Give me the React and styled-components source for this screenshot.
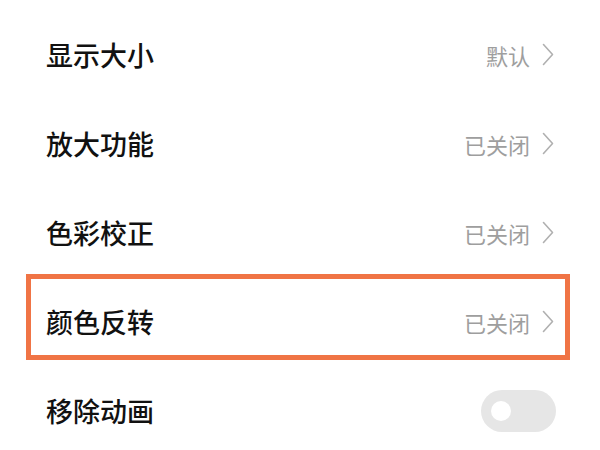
import React from "react";
import styled, { createGlobalStyle } from "styled-components";

const Global = createGlobalStyle`
  html, body { margin: 0; padding: 0; background: #ffffff; }
  body { font-family: "Noto Sans CJK SC", "Noto Sans", sans-serif; }
`;

const List = styled.div`
  width: 600px;
  height: 450px;
  overflow: hidden;
  padding-top: 10px;
  box-sizing: border-box;
  display: flex;
  flex-direction: column;
`;

const Row = styled.div`
  position: relative;
  height: 89px;
  flex: none;
  display: flex;
  align-items: center;
  justify-content: space-between;
  padding: 0 46px 0 46px;
  box-sizing: border-box;
  ${(p) =>
    p.$highlight &&
    `
    &::after {
      content: "";
      position: absolute;
      left: 26px;
      right: 30px;
      top: -3px;
      bottom: 6px;
      border: 5px solid #f07445;
    }
  `}
`;

const Title = styled.span`
  font-size: 27px;
  font-weight: 500;
  color: #111111;
`;

const Right = styled.div`
  display: flex;
  align-items: center;
  gap: 12px;
`;

const Value = styled.span`
  font-size: 22px;
  color: #9e9e9e;
`;

const Chevron = () => (
  <svg width="12" height="23" viewBox="0 0 12 23">
    <path d="M1.5 1.5 L10.5 11.5 L1.5 21.5" fill="none" stroke="#b0b0b0" strokeWidth="1.6" strokeLinecap="round" strokeLinejoin="round" />
  </svg>
);

const Track = styled.div`
  width: 75px;
  height: 42px;
  border-radius: 21px;
  background: #e6e6e6;
  display: flex;
  align-items: center;
  padding-left: 10px;
  box-sizing: border-box;
  margin-right: -2px;
`;

const Knob = styled.div`
  width: 20px;
  height: 20px;
  border-radius: 50%;
  background: #ffffff;
`;

const items = [
  { title: "显示大小", value: "默认" },
  { title: "放大功能", value: "已关闭" },
  { title: "色彩校正", value: "已关闭" },
  { title: "颜色反转", value: "已关闭", highlight: true },
  { title: "移除动画", toggle: true },
];

export default function App() {
  return (
    <>
      <Global />
      <List>
        {items.map((it) => (
          <Row key={it.title} $highlight={it.highlight}>
            <Title>{it.title}</Title>
            {it.toggle ? (
              <Track>
                <Knob />
              </Track>
            ) : (
              <Right>
                <Value>{it.value}</Value>
                <Chevron />
              </Right>
            )}
          </Row>
        ))}
      </List>
    </>
  );
}
